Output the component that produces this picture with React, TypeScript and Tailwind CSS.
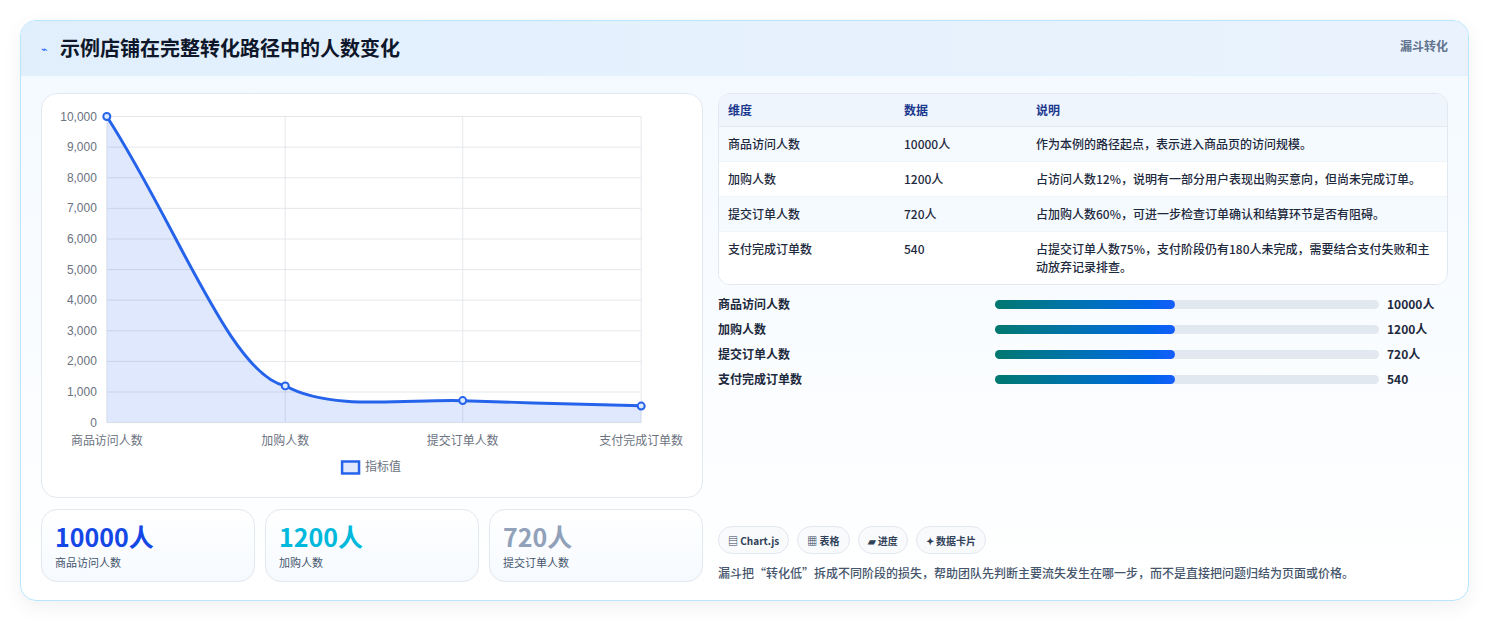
import React from 'react';

const font = { fontFamily: '"Noto Sans CJK SC", "Noto Sans", sans-serif' };

const rows = [
  ['商品访问人数', '10000人', '作为本例的路径起点，表示进入商品页的访问规模。'],
  ['加购人数', '1200人', '占访问人数12%，说明有一部分用户表现出购买意向，但尚未完成订单。'],
  ['提交订单人数', '720人', '占加购人数60%，可进一步检查订单确认和结算环节是否有阻碍。'],
  ['支付完成订单数', '540', '占提交订单人数75%，支付阶段仍有180人未完成，需要结合支付失败和主动放弃记录排查。'],
];

const bars = [
  ['商品访问人数', '10000人'],
  ['加购人数', '1200人'],
  ['提交订单人数', '720人'],
  ['支付完成订单数', '540'],
];

const Chart = () => {
  const yTicks = [0, 1000, 2000, 3000, 4000, 5000, 6000, 7000, 8000, 9000, 10000];
  const y = (v: number) => 329 - v * 0.0307;
  const xs = [65, 244, 422, 601];
  const labels = ['商品访问人数', '加购人数', '提交订单人数', '支付完成订单数'];
  const vals = [10000, 1200, 720, 540];
  const line = 'M65 22 C 135 130, 190 282, 244 292 C 290 318, 370 305, 422 307 C 480 309, 550 311, 601 312';
  return (
    <svg viewBox="0 0 662 403" className="w-full h-[403px]" style={{ fontFamily: '"Liberation Sans", "Noto Sans CJK SC", sans-serif' }}>
      {yTicks.map((t) => (
        <g key={t}>
          <line x1={65} x2={601} y1={y(t)} y2={y(t)} stroke="#e5e7eb" />
          <text x={55} y={y(t) + 4} fontSize="12" fill="#6b7280" textAnchor="end">{t.toLocaleString('en-US')}</text>
        </g>
      ))}
      {xs.map((x, i) => (
        <g key={x}>
          <line x1={x} x2={x} y1={22} y2={329} stroke="#e5e7eb" />
          <text x={x} y={351} fontSize="12" fill="#6b7280" textAnchor="middle">{labels[i]}</text>
        </g>
      ))}
      <path d={`${line} L601 329 L65 329 Z`} fill="rgba(37,99,235,0.15)" />
      <path d={line} fill="none" stroke="#2563eb" strokeWidth="3" />
      {xs.map((x, i) => (
        <circle key={x} cx={x} cy={y(vals[i])} r="3.5" fill="#dbeafe" stroke="#2563eb" strokeWidth="2" />
      ))}
      <rect x={301} y={368} width={17} height={12} fill="rgba(37,99,235,0.15)" stroke="#2563eb" strokeWidth="2.5" />
      <text x={324} y={378} fontSize="12" fill="#6b7280">指标值</text>
    </svg>
  );
};

export default function App() {
  return (
    <div className="min-h-[621px] bg-white px-5 pt-5 pb-5" style={font}>
      <div className="rounded-2xl border border-sky-200 bg-gradient-to-b from-[#f3f9ff] to-white shadow-[0_6px_20px_rgba(0,0,0,0.06)] overflow-hidden">
        <div className="flex items-center justify-between h-[55px] px-5 bg-gradient-to-r from-[#e1effd] to-[#eaf3fd] border-b border-sky-100">
          <div className="flex items-center gap-3">
            <span className="text-[11px] text-blue-600">⌁</span>
            <h1 className="text-[20px] font-bold text-slate-900">示例店铺在完整转化路径中的人数变化</h1>
          </div>
          <span className="text-[12px] font-semibold text-slate-500 self-start mt-4">漏斗转化</span>
        </div>
        <div className="flex gap-[15px] px-5 pt-[17px] pb-[18px]">
          <div className="w-[662px] shrink-0 flex flex-col gap-[11px]">
            <div className="rounded-2xl border border-slate-200 bg-white">
              <Chart />
            </div>
            <div className="grid grid-cols-3 gap-[10px]">
              {[
                ['10000人', '商品访问人数', 'text-blue-700'],
                ['1200人', '加购人数', 'text-cyan-500'],
                ['720人', '提交订单人数', 'text-slate-400'],
              ].map(([v, l, c]) => (
                <div key={l} className="h-[73px] rounded-2xl border border-slate-200 bg-gradient-to-b from-white to-[#f6faff] px-[13px] pt-[10px]">
                  <div className={`text-[25px] font-bold leading-[32px] ${c}`}>{v}</div>
                  <div className="text-[11px] text-slate-600 mt-[2px]">{l}</div>
                </div>
              ))}
            </div>
          </div>
          <div className="flex-1 flex flex-col">
            <div className="rounded-xl border border-slate-200 overflow-hidden bg-white text-[12px] text-slate-800">
              <div className="flex h-[33px] items-center bg-[#eef5fd] border-b border-slate-200 font-semibold text-blue-900">
                <div className="w-[185px] pl-[9px]">维度</div>
                <div className="w-[132px]">数据</div>
                <div className="flex-1">说明</div>
              </div>
              {rows.map((r, i) => (
                <div key={r[0]} className={`flex py-[8px] leading-[18px] font-medium ${i < 3 ? 'border-b border-slate-100' : ''} ${i % 2 === 0 ? 'bg-[#f5faff]' : 'bg-white'}`}>
                  <div className="w-[185px] pl-[9px]">{r[0]}</div>
                  <div className="w-[132px]">{r[1]}</div>
                  <div className="flex-1 pr-2">{r[2]}</div>
                </div>
              ))}
            </div>
            <div className="flex flex-col gap-[7px] mt-[10px]">
              {bars.map(([l, v]) => (
                <div key={l} className="flex items-center h-[18px] text-[12px] font-semibold text-slate-800">
                  <div className="w-[277px]">{l}</div>
                  <div className="w-[384px] h-[9px] rounded-full bg-slate-200">
                    <div className="w-[47%] h-full rounded-full bg-gradient-to-r from-teal-700 to-blue-600" />
                  </div>
                  <div className="ml-2 font-bold">{v}</div>
                </div>
              ))}
            </div>
            <div className="flex-1" />
            <div className="flex gap-[8px] text-[10px] font-semibold text-slate-700">
              {['▤ Chart.js', '▦ 表格', '▰ 进度', '✦ 数据卡片'].map((c) => (
                <span key={c} className="h-[28px] px-[9px] flex items-center rounded-full border border-slate-200 bg-slate-50">{c}</span>
              ))}
            </div>
            <p className="mt-[10px] text-[12px] font-medium text-slate-600">漏斗把“转化低”拆成不同阶段的损失，帮助团队先判断主要流失发生在哪一步，而不是直接把问题归结为页面或价格。</p>
          </div>
        </div>
      </div>
    </div>
  );
}
